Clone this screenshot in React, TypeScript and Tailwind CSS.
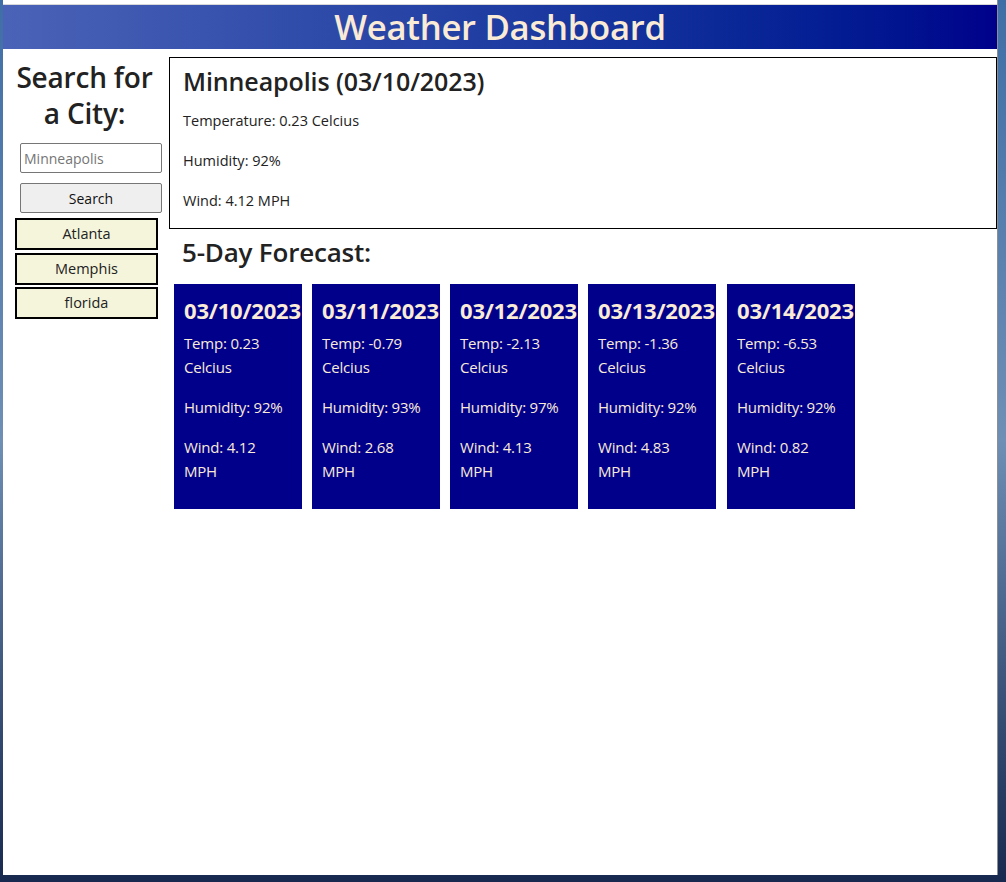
import React from "react";

const forecast = [
  { date: "03/10/2023", temp: "0.23", hum: "92%", wind: "4.12" },
  { date: "03/11/2023", temp: "-0.79", hum: "93%", wind: "2.68" },
  { date: "03/12/2023", temp: "-2.13", hum: "97%", wind: "4.13" },
  { date: "03/13/2023", temp: "-1.36", hum: "92%", wind: "4.83" },
  { date: "03/14/2023", temp: "-6.53", hum: "92%", wind: "0.82" },
];

export default function App() {
  return (
    <div
      className="w-[1006px] h-[882px] overflow-hidden flex flex-col bg-gradient-to-b from-[#3f6ea6] via-[#6f8fb5] to-[#18294f]"
      style={{ fontFamily: '"Open Sans", "Noto Sans", sans-serif' }}
    >
      <div className="ml-[3px] mr-[8px] h-[875px] bg-white border-r border-[#8a8f96] flex flex-col">
        <div className="h-[4px] bg-white" />
        <div className="h-[1px] bg-[#d8d8d8]" />
        <header className="h-[44px] bg-gradient-to-r from-[#4b63b7] to-[#00008b] flex items-center justify-center">
          <h1 className="text-[34.7px] leading-[44px] font-semibold text-[#faebd7] tracking-[-0.3px]">
            Weather Dashboard
          </h1>
        </header>
        <div className="flex flex-1">
          <aside className="w-[163px] flex flex-col">
            <h2 className="mt-[10px] text-[28px] leading-[36px] font-semibold text-center text-[#222] tracking-[-0.2px]">
              Search for
              <br />a City:
            </h2>
            <input
              className="mt-[12px] ml-[17px] w-[142px] h-[30px] border border-[#767676] rounded-[2px] px-[3px] text-[14px] text-[#222] placeholder:text-[#757575] outline-none"
              placeholder="Minneapolis"
            />
            <button className="mt-[10px] ml-[17px] w-[142px] h-[30px] bg-[#efefef] border border-[#767676] rounded-[2px] text-[14px] text-[#111]">
              Search
            </button>
            <div className="mt-[5px] ml-[12px] flex flex-col gap-[2.5px]">
              {["Atlanta", "Memphis", "florida"].map((c) => (
                <button
                  key={c}
                  className="w-[143px] h-[32px] bg-[#f5f5dc] border-2 border-black text-[14.5px] text-[#222]"
                >
                  {c}
                </button>
              ))}
            </div>
          </aside>
          <main className="flex-1 ml-[3px] flex flex-col">
            <section className="mt-[8px] h-[172px] border border-black pl-[13px] pt-[6px] flex flex-col text-[#222]">
              <h2 className="text-[25px] leading-[34px] font-semibold tracking-[-0.1px]">
                Minneapolis (03/10/2023)
              </h2>
              <p className="mt-[13px] text-[14.5px] leading-[20px]">Temperature: 0.23 Celcius</p>
              <p className="mt-[20px] text-[14.5px] leading-[20px]">Humidity: 92%</p>
              <p className="mt-[20px] text-[14.5px] leading-[20px]">Wind: 4.12 MPH</p>
            </section>
            <h2 className="mt-[6px] pl-[13px] text-[26px] leading-[34px] font-semibold text-[#222] tracking-[-0.2px]">
              5-Day Forecast:
            </h2>
            <div className="mt-[15px] pl-[5px] flex gap-[10px]">
              {forecast.map((d, i) => (
                <div
                  key={d.date}
                  className={`w-[128px] h-[225px] bg-[#00008b] text-[#faebd7] pl-[10px] pt-[11px] flex flex-col ${i === 4 ? "ml-[1px]" : ""}`}
                >
                  <h3 className="text-[22px] leading-[30px] font-bold whitespace-nowrap tracking-[-0.2px]">
                    {d.date}
                  </h3>
                  <p className="mt-[6px] text-[15px] leading-[24px] whitespace-nowrap tracking-[-0.2px]">
                    Temp: {d.temp}
                    <br />
                    Celcius
                  </p>
                  <p className="mt-[16px] text-[15px] leading-[24px] whitespace-nowrap tracking-[-0.2px]">
                    Humidity: {d.hum}
                  </p>
                  <p className="mt-[16px] text-[15px] leading-[24px] whitespace-nowrap tracking-[-0.2px]">
                    Wind: {d.wind}
                    <br />
                    MPH
                  </p>
                </div>
              ))}
            </div>
          </main>
        </div>
      </div>
    </div>
  );
}
